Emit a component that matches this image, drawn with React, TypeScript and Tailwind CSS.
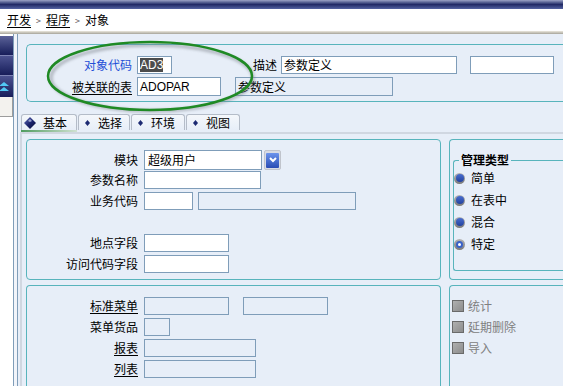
import type { ReactNode } from "react";

const latin = "font-['Liberation_Sans','Noto_Sans_CJK_SC',sans-serif] text-[11px]";

function Box({ className = "", ro = false, children }: { className?: string; ro?: boolean; children?: ReactNode }) {
  return (
    <div
      className={`flex shrink-0 items-center overflow-hidden whitespace-nowrap border border-[#7f9db9] pl-[2px] text-[12px] leading-none ${
        ro ? "bg-[#e7eef8]" : "bg-white"
      } ${className}`}
    >
      {children}
    </div>
  );
}

function Label({ children, u = false, className = "" }: { children: ReactNode; u?: boolean; className?: string }) {
  return (
    <div className={`shrink-0 whitespace-nowrap text-right leading-none ${u ? "underline underline-offset-2" : ""} ${className}`}>
      {children}
    </div>
  );
}

function Diamond() {
  return (
    <svg width="12" height="12" viewBox="0 0 12 12">
      <defs>
        <linearGradient id="dg" x1="0" y1="0" x2="1" y2="1">
          <stop offset="0" stopColor="#6a78c0" />
          <stop offset="0.5" stopColor="#1c2470" />
          <stop offset="1" stopColor="#080c30" />
        </linearGradient>
      </defs>
      <polygon points="6,0 12,6 6,12 0,6" fill="url(#dg)" />
      <polygon points="6,2 8,4 6,5 4,4" fill="#c8d0f0" opacity="0.7" />
    </svg>
  );
}

function SmallDiamond() {
  return (
    <svg width="5" height="6" viewBox="0 0 5 6">
      <polygon points="2.5,0 5,3 2.5,6 0,3" fill="#1c2a72" />
    </svg>
  );
}

function Tab({ label, active = false, className }: { label: string; active?: boolean; className: string }) {
  return (
    <div className={`flex flex-col ${className}`}>
      <div className="flex h-[16px] items-center rounded-t-[3px] border border-b-0 border-[#b4bcc8] bg-gradient-to-b from-[#f4f7fb] to-[#e7eef8]">
        {active ? (
          <>
            <span className="ml-[2px] flex"><Diamond /></span>
            <span className="ml-[7px] leading-none">{label}</span>
          </>
        ) : (
          <>
            <span className="ml-[6px] flex"><SmallDiamond /></span>
            <span className="ml-[8px] leading-none">{label}</span>
          </>
        )}
      </div>
      <div className={`h-[2px] ${active ? "bg-gradient-to-r from-[#4f9c60] to-[#cfe2d2]" : ""}`} />
    </div>
  );
}

function Radio({ special = false }: { special?: boolean }) {
  return (
    <span className="flex h-[11px] w-[11px] items-center justify-center rounded-full bg-gradient-to-b from-[#b4b4b4] to-[#7a7a7a]">
      {special ? (
        <span className="h-[7px] w-[7px] rounded-full border-2 border-[#3a62c8] bg-white" />
      ) : (
        <span className="h-[8px] w-[8px] rounded-full bg-gradient-to-b from-[#4a6ed0] to-[#23429e]" />
      )}
    </span>
  );
}

function Check({ label }: { label: string }) {
  return (
    <div className="flex h-[12px] items-center">
      <span className="h-[12px] w-[12px] border border-[#6a6a6a] bg-gradient-to-br from-[#b0b0b0] to-[#8c8c8c]" />
      <span className="ml-[4px] leading-none text-[#808080]">{label}</span>
    </div>
  );
}

export default function App() {
  return (
    <div className="relative h-[386px] w-[563px] overflow-hidden bg-white font-['Noto_Sans_CJK_SC','Noto_Sans',sans-serif] text-[12px] text-black">
      {/* window caption strip */}
      <div className="h-[9px] bg-gradient-to-b from-[#9ea4c6] via-[#222a66] to-[#5664a2]" />
      {/* breadcrumb */}
      <div className="flex h-[22px] items-center gap-[5px] pl-[7px]">
        <span className="leading-none underline underline-offset-2">开发</span>
        <span className="text-[9px] leading-none text-[#555]">&gt;</span>
        <span className="leading-none underline underline-offset-2">程序</span>
        <span className="text-[9px] leading-none text-[#555]">&gt;</span>
        <span className="leading-none">对象</span>
      </div>
      <div className="h-[3px] bg-gradient-to-b from-[#ece9df] to-[#a6a49a]" />

      <div className="flex h-[352px]">
        {/* sidebar */}
        <div className="flex w-[13px] flex-col">
          <div className="h-[2px]" />
          <div className="h-[20px] border-b border-[#7c82b4] bg-gradient-to-b from-[#5c6298] to-[#181d5a]" />
          <div className="h-[20px] border-b border-[#7c82b4] bg-gradient-to-b from-[#4c5290] to-[#181d5a]" />
          <div className="flex h-[21px] items-center bg-gradient-to-b from-[#4c5290] to-[#181d5a]">
            <svg width="10" height="10" viewBox="0 0 10 10">
              <polygon points="4,0 9,4 -1,4" fill="#52c8f4" />
              <polygon points="4,5 9,9 -1,9" fill="#52c8f4" />
            </svg>
          </div>
          <div className="h-[20px] border-r border-b border-[#9c9c9c] bg-[#f3f2ee]" />
        </div>
        <div className="w-[5px] border-x border-[#7f9db9] bg-[#f1f4fa]" />

        {/* main */}
        <div className="flex flex-1 flex-col bg-[#e7eef8]">
          {/* header panel */}
          <div className="ml-[8px] mt-[10px] flex h-[58px] flex-col gap-[3px] rounded-l-[5px] border border-r-0 border-[#58b4bc] pt-[11px]">
            <div className="flex h-[18px] items-center">
              <Label className="w-[105px] text-[#1e4fd6]">对象代码</Label>
              <Box className={`ml-[5px] h-[18px] w-[35px] ${latin}`}>
                <span className="bg-[#4c4c4c] leading-[14px] text-white">AD3</span>
              </Box>
              <Label className="w-[105px]">描述</Label>
              <Box className="ml-[4px] h-[18px] w-[176px]">参数定义</Box>
              <Box className="ml-[13px] h-[18px] w-[84px]" />
            </div>
            <div className="flex h-[19px] items-center">
              <Label u className="w-[105px]">被关联的表</Label>
              <Box className={`ml-[5px] h-[19px] w-[84px] ${latin}`}>ADOPAR</Box>
              <Box ro className="ml-[14px] h-[19px] w-[158px]">参数定义</Box>
            </div>
          </div>

          {/* tabs */}
          <div className="ml-[2px] mt-[12px] flex h-[18px] items-end pl-[1px]">
            <Tab active label="基本" className="w-[56px]" />
            <Tab label="选择" className="ml-[1px] w-[52px]" />
            <Tab label="环境" className="ml-[1px] w-[54px]" />
            <Tab label="视图" className="ml-[1px] w-[54px]" />
          </div>
          <div className="ml-[2px] h-[2px] bg-[#d0d7e1]" />

          {/* tab body */}
          <div className="ml-[2px] flex flex-1 flex-col gap-[5px] border-l-2 border-[#d0d7e1] pl-[4px] pt-[5px]">
            <div className="flex h-[141px] gap-[8px]">
              <div className="flex w-[415px] flex-col rounded-[4px] border border-[#58b4bc] pt-[10px]">
                <div className="flex h-[20px] items-center">
                  <Label className="w-[111px]">模块</Label>
                  <Box className="ml-[6px] h-[20px] w-[118px] pl-[3px]">超级用户</Box>
                  <div className="ml-[2px] flex h-[20px] w-[17px] items-center justify-center rounded-[2px] border border-[#c0c4cc] bg-[#d8dce4]">
                    <div className="flex h-[15px] w-[13px] items-center justify-center rounded-[1px] bg-gradient-to-b from-[#6c94ec] to-[#2a4cb4]">
                      <svg width="8" height="6" viewBox="0 0 8 6">
                        <polyline points="1,1 4,4 7,1" fill="none" stroke="white" strokeWidth="2" />
                      </svg>
                    </div>
                  </div>
                </div>
                <div className="mt-[1px] flex h-[18px] items-center">
                  <Label className="w-[111px]">参数名称</Label>
                  <Box className="ml-[6px] h-[18px] w-[117px]" />
                </div>
                <div className="mt-[3px] flex h-[18px] items-center">
                  <Label className="w-[111px]">业务代码</Label>
                  <Box className="ml-[6px] h-[18px] w-[49px]" />
                  <Box ro className="ml-[5px] h-[18px] w-[158px]" />
                </div>
                <div className="mt-[24px] flex h-[18px] items-center">
                  <Label className="w-[111px]">地点字段</Label>
                  <Box className="ml-[6px] h-[18px] w-[85px]" />
                </div>
                <div className="mt-[3px] flex h-[18px] items-center">
                  <Label className="w-[111px]">访问代码字段</Label>
                  <Box className="ml-[6px] h-[18px] w-[85px]" />
                </div>
              </div>
              <div className="flex flex-1 flex-col rounded-l-[4px] border border-r-0 border-[#58b4bc] pl-[3px] pt-[13px]">
                <fieldset className="h-[118px] rounded-l-[3px] border border-r-0 border-[#58b4bc]">
                  <legend className="ml-[5px] px-[2px] text-[12px] font-bold leading-[14px]">管理类型</legend>
                  <div className="flex flex-col">
                    {["简单", "在表中", "混合", "特定"].map((t, i) => (
                      <div key={t} className="flex h-[22px] items-center">
                        <Radio special={i === 3} />
                        <span className="ml-[6px] leading-none">{t}</span>
                      </div>
                    ))}
                  </div>
                </fieldset>
              </div>
            </div>

            <div className="flex flex-1 gap-[8px]">
              <div className="flex w-[415px] flex-col gap-[3px] rounded-t-[4px] border border-b-0 border-[#58b4bc] pt-[11px]">
                <div className="flex h-[18px] items-center">
                  <Label u className="w-[111px]">标准菜单</Label>
                  <Box ro className="ml-[6px] h-[18px] w-[85px]" />
                  <Box ro className="ml-[14px] h-[18px] w-[85px]" />
                </div>
                <div className="flex h-[18px] items-center">
                  <Label className="w-[111px]">菜单货品</Label>
                  <Box ro className="ml-[6px] h-[18px] w-[26px]" />
                </div>
                <div className="flex h-[18px] items-center">
                  <Label u className="w-[111px]">报表</Label>
                  <Box ro className="ml-[6px] h-[18px] w-[112px]" />
                </div>
                <div className="flex h-[18px] items-center">
                  <Label u className="w-[111px]">列表</Label>
                  <Box ro className="ml-[6px] h-[18px] w-[112px]" />
                </div>
              </div>
              <div className="flex flex-1 flex-col gap-[9px] rounded-tl-[4px] border-l border-t border-[#58b4bc] pl-[2px] pt-[14px]">
                <Check label="统计" />
                <Check label="延期删除" />
                <Check label="导入" />
              </div>
            </div>
          </div>
        </div>
      </div>

      {/* hand-drawn highlight ellipse */}
      <svg className="pointer-events-none absolute left-0 top-0" width="563" height="386">
        <defs>
          <filter id="sh" x="-10%" y="-20%" width="120%" height="140%">
            <feGaussianBlur stdDeviation="1.6" />
          </filter>
        </defs>
        <ellipse cx="152" cy="78" rx="101" ry="33" fill="none" stroke="#7a8088" strokeWidth="3" opacity="0.55" filter="url(#sh)" />
        <ellipse cx="150" cy="76" rx="102" ry="34" fill="none" stroke="#1f8a24" strokeWidth="2.5" />
      </svg>
    </div>
  );
}
